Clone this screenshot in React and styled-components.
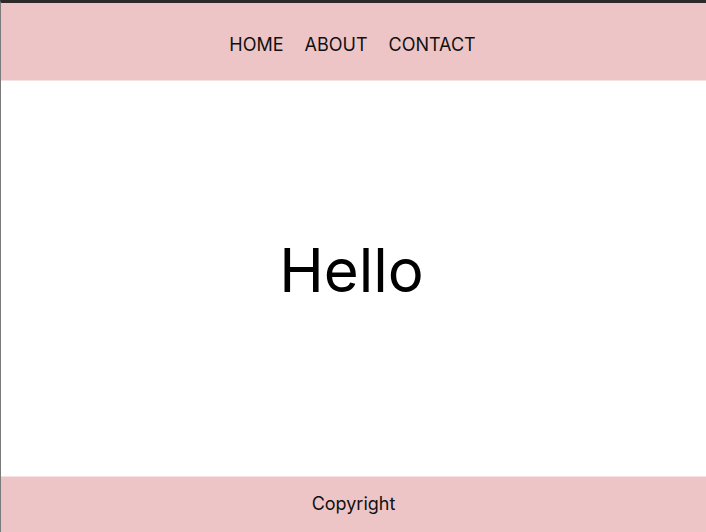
import styled, { createGlobalStyle } from 'styled-components';

const GlobalStyle = createGlobalStyle`
  html, body {
    margin: 0;
    padding: 0;
    background: #ffffff;
  }
  body {
    font-family: Inter, "Noto Sans", sans-serif;
    color: #111111;
  }
`;

const Frame = styled.div`
  display: flex;
  flex-direction: column;
  height: 532px;
  box-sizing: border-box;
  border-top: 3px solid #2e2a2a;
  border-left: 1px solid #7a7a7a;
`;

const Header = styled.header`
  display: flex;
  justify-content: center;
  align-items: center;
  height: 78px;
  padding-top: 5px;
  box-sizing: border-box;
  background-color: #eec5c6;
  border-bottom: 1px solid #f6e2e2;
`;

const Nav = styled.nav`
  display: flex;
  gap: 21px;
  margin-left: -2px;
`;

const NavLink = styled.a`
  font-size: 18px;
  color: #111111;
  text-decoration: none;
`;

const Main = styled.main`
  flex: 1;
  display: flex;
  justify-content: center;
  align-items: center;
  padding-bottom: 18px;
`;

const Title = styled.h1`
  margin: 0 4px 0 0;
  font-size: 60px;
  font-weight: 400;
  color: #000000;
`;

const Footer = styled.footer`
  display: flex;
  justify-content: center;
  align-items: center;
  height: 56px;
  padding-bottom: 2px;
  background-color: #eec5c6;
  border-top: 1px solid #f6e2e2;
  box-sizing: border-box;
  font-size: 18px;
`;

const App = () => (
  <>
    <GlobalStyle />
    <Frame>
      <Header>
        <Nav>
          <NavLink>HOME</NavLink>
          <NavLink>ABOUT</NavLink>
          <NavLink>CONTACT</NavLink>
        </Nav>
      </Header>
      <Main>
        <Title>Hello</Title>
      </Main>
      <Footer>Copyright</Footer>
    </Frame>
  </>
);

export default App;
